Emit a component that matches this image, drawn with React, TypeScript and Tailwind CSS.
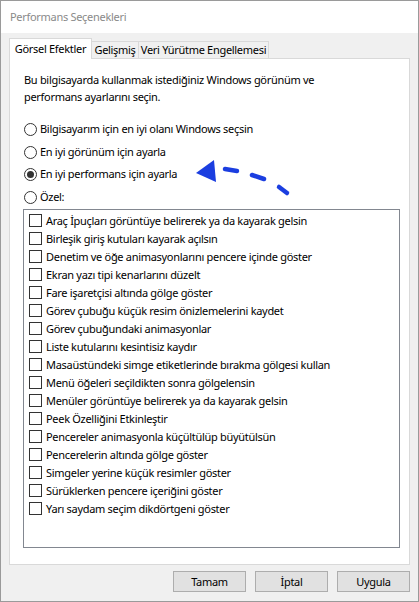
import React from 'react';

const items = [
  'Araç İpuçları görüntüye belirerek ya da kayarak gelsin',
  'Birleşik giriş kutuları kayarak açılsın',
  'Denetim ve öğe animasyonlarını pencere içinde göster',
  'Ekran yazı tipi kenarlarını düzelt',
  'Fare işaretçisi altında gölge göster',
  'Görev çubuğu küçük resim önizlemelerini kaydet',
  'Görev çubuğundaki animasyonlar',
  'Liste kutularını kesintisiz kaydır',
  'Masaüstündeki simge etiketlerinde bırakma gölgesi kullan',
  'Menü öğeleri seçildikten sonra gölgelensin',
  'Menüler görüntüye belirerek ya da kayarak gelsin',
  'Peek Özelliğini Etkinleştir',
  'Pencereler animasyonla küçültülüp büyütülsün',
  'Pencerelerin altında gölge göster',
  'Simgeler yerine küçük resimler göster',
  'Sürüklerken pencere içeriğini göster',
  'Yarı saydam seçim dikdörtgeni göster',
];

const radios = [
  { label: 'Bilgisayarım için en iyi olanı Windows seçsin', checked: false },
  { label: 'En iyi görünüm için ayarla', checked: false },
  { label: 'En iyi performans için ayarla', checked: true },
  { label: 'Özel:', checked: false },
];

const Radio: React.FC<{ checked: boolean }> = ({ checked }) => (
  <span className="w-[13px] h-[13px] rounded-full border border-[#333] bg-white flex items-center justify-center shrink-0">
    {checked && <span className="w-[7px] h-[7px] rounded-full bg-[#333]" />}
  </span>
);

const Arrow = () => (
  <svg className="absolute left-[190px] top-[155px]" width="110" height="50" viewBox="0 0 110 50">
    <polygon points="5,17 23,4 25,26" fill="#1b3ee0" />
    <g stroke="#1b3ee0" strokeWidth="4.5" strokeLinecap="round" fill="none">
      <line x1="34" y1="13" x2="46" y2="15" />
      <line x1="61" y1="19" x2="73" y2="23" />
      <line x1="88" y1="31" x2="96" y2="37" />
    </g>
  </svg>
);

export default function App() {
  return (
    <div
      className="relative w-[419px] h-[602px] flex flex-col border border-[#9a9a9a] text-[11px] tracking-[-0.3px] text-black bg-[#f0f0f0]"
      style={{ fontFamily: '"Noto Sans", "Open Sans", sans-serif' }}
    >
      <div className="h-[32px] bg-white flex items-center px-[9px] text-[#8a8a8a]">Performans Seçenekleri</div>

      <div className="flex-1 flex flex-col px-[8px] pt-[5px]">
        <div className="flex items-end h-[21px] relative z-10 whitespace-nowrap">
          <div className="h-[21px] w-[83px] bg-white border border-b-0 border-[#d9d9d9] flex items-center justify-center">Görsel Efektler</div>
          <div className="h-[18px] w-[47px] bg-[#f0f0f0] border border-l-0 border-[#d9d9d9] flex items-center justify-center">Gelişmiş</div>
          <div className="h-[18px] w-[130px] bg-[#f0f0f0] border border-l-0 border-[#d9d9d9] flex items-center justify-center">Veri Yürütme Engellemesi</div>
        </div>

        <div className="-mt-px h-[507px] bg-white border border-[#d9d9d9] flex flex-col pl-[13px] pr-[9px]">
          <p className="mt-[12px] pl-[1px] leading-[17px]">
            Bu bilgisayarda kullanmak istediğiniz Windows görünüm ve
            <br />
            performans ayarlarını seçin.
          </p>

          <div className="mt-[13px] pl-[1px] flex flex-col">
            {radios.map((r) => (
              <div key={r.label} className="h-[22.7px] flex items-center gap-[3px]">
                <Radio checked={r.checked} />
                <span>{r.label}</span>
              </div>
            ))}
          </div>

          <div className="h-[339px] border border-[#828790] pt-[2px] pl-[5px]">
            {items.map((t) => (
              <div key={t} className="h-[18px] flex items-center gap-[4px] whitespace-nowrap">
                <span className="w-[13px] h-[13px] border border-[#333] bg-white shrink-0" />
                <span>{t}</span>
              </div>
            ))}
          </div>
        </div>

        <div className="flex justify-end gap-[9px] mt-[6px]">
          {['Tamam', 'İptal', 'Uygula'].map((b) => (
            <button
              key={b}
              className="w-[73px] h-[21px] bg-[#e1e1e1] border border-[#adadad] flex items-center justify-center leading-none"
            >
              {b}
            </button>
          ))}
        </div>
      </div>

      <Arrow />
    </div>
  );
}
